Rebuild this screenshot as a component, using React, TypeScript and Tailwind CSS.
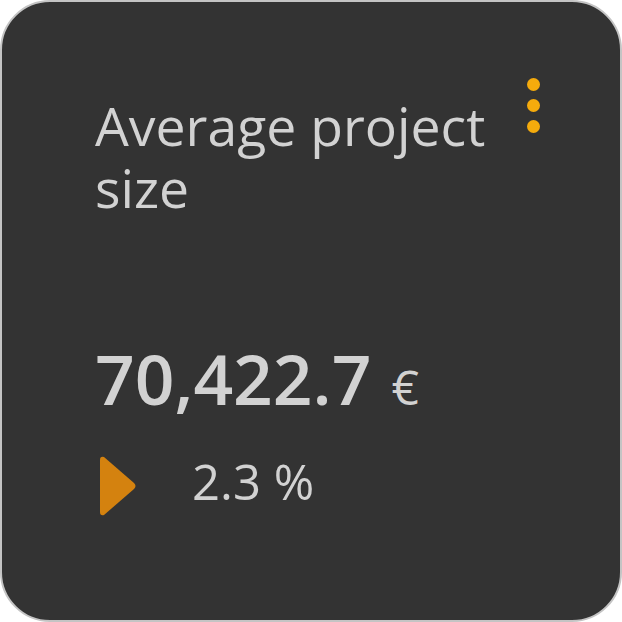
export default function App() {
  return (
    <div className="w-[622px] h-[622px] bg-white">
      <div
        className="relative w-[622px] h-[622px] rounded-[50px] border-2 border-[#c4c4c4] bg-[#333333] text-[#d2d2d2] pl-[93px] pt-[93px]"
        style={{ fontFamily: '"Open Sans", sans-serif' }}
      >
        <div className="absolute left-[525px] top-[76px] flex flex-col gap-[8px]">
          <span className="block w-[13px] h-[13px] rounded-full bg-[#f5ab0c]" />
          <span className="block w-[13px] h-[13px] rounded-full bg-[#f5ab0c]" />
          <span className="block w-[13px] h-[13px] rounded-full bg-[#f5ab0c]" />
        </div>
        <div className="text-[53.5px] leading-[62px] w-[430px]">Average project size</div>
        <div className="mt-[123px] flex items-baseline">
          <span className="text-[69.5px] leading-[72px] font-semibold">70,422.7</span>
          <span className="ml-[20px] text-[48px] leading-[72px]">€</span>
        </div>
        <div className="mt-[22px] flex items-center">
          <svg width="40" height="62" viewBox="0 0 40 62" className="ml-[2px] mt-[10px]">
            <path d="M3 5 Q3 1 7 2 L37 28 Q40 31 37 34 L7 60 Q3 61 3 57 Z" fill="#d4820f" />
          </svg>
          <span className="ml-[55px] text-[49px] leading-[60px]">2.3 %</span>
        </div>
      </div>
    </div>
  );
}
